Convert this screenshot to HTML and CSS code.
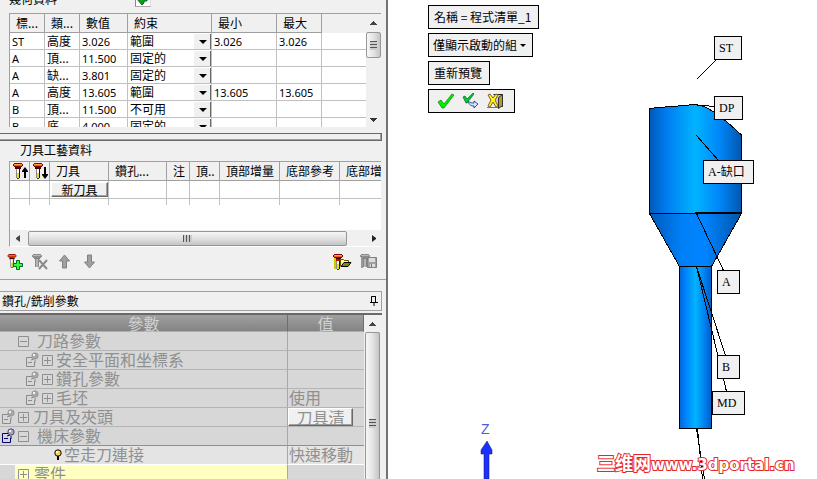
FILE: index.html
```
<!DOCTYPE html>
<html lang="zh-Hant">
<head>
<meta charset="utf-8">
<title>鑽孔/銑削參數</title>
<link rel="stylesheet" href="styles.css">
</head>
<body>
<svg class="sprite" aria-hidden="true">
  <symbol id="drill" viewBox="0 0 12 16">
    <path d="M2 0h8v1h1v2h-1v1H2V3H1V1h1z" fill="#8b0000"/>
    <path d="M2 1h8v1H2z" fill="#ffa040"/><path d="M2 2h8v1H2z" fill="#f06010"/>
    <path d="M3 4h6v2H3z" fill="#400"/><path d="M4 6h1v9H4z" fill="#888"/><path d="M5 6h2v5H5z" fill="#fff"/><path d="M5 10h2v5H5z" fill="#f0e000"/><path d="M7 6h1v9H7z" fill="#111"/><path d="M5 15h2v1H5z" fill="#333"/>
  </symbol>
  <symbol id="drill-off" viewBox="0 0 12 16">
    <path d="M2 0h8v1h1v2h-1v1H2V3H1V1h1z" fill="#8c8c8c"/><path d="M2 1h8v1H2z" fill="#b8b8b8"/><path d="M3 4h6v1H3z" fill="#808080"/><path d="M4 5h1v8H4zM7 5h1v8H7z" fill="#8a8a8a"/><path d="M5 5h2v8H5z" fill="#b5b5b5"/>
  </symbol>
  <symbol id="plus" viewBox="0 0 11 11"><path d="M.5.5h10v10H.5zM2 5.500h7M5.500 2v7" fill="none" stroke="#8f8f8f"/></symbol>
  <symbol id="minus" viewBox="0 0 11 11"><path d="M.5.5h10v10H.5zM2 5.500h7" fill="none" stroke="#8f8f8f"/></symbol>
  <symbol id="link" viewBox="0 0 13 15">
    <path d="M6 5.500H.5v9h8V10M2 10.500h4" fill="none" stroke="currentColor"/>
    <path d="M8 7l-3 1M9 8v3" stroke="currentColor"/>
    <circle cx="9" cy="4" r="3.200" fill="#a8a8a8" stroke="currentColor" stroke-width=".6"/><path d="M7 2h2v2H7z" fill="#f4f4f4"/>
  </symbol>
  <symbol id="up" viewBox="0 0 7 4"><path d="M3 0h1v1h1v1h1v1h1v1H0V3h1V2h1V1h1z" fill="#444"/></symbol>
  <symbol id="down" viewBox="0 0 7 4"><path d="M0 0h7v1H6v1H5v1H4v1H3V3H2V2H1V1H0z" fill="#333"/></symbol>
</svg>

<div class="app">
  <aside class="side">
    <section class="geometry">
      <div class="geo-head">
        <h2>幾何資料</h2>
        <button class="import" aria-label="匯入"><svg width="12" height="12"><path d="M0 6l5-6v3h5v5H7v2L5 12z" fill="#12a012" stroke="#063" /><path d="M3 6l3-3v4z" fill="#5f5"/></svg></button>
      </div>
      <div class="geo-grid">
        <table class="grid">
          <colgroup><col class="w-tag"><col class="w-tag"><col class="w-num"><col class="w-rule"><col class="w-min"><col class="w-max"><col></colgroup>
          <thead><tr><th>標...</th><th>類...</th><th>數值</th><th>約束</th><th>最小</th><th>最大</th><th class="rest"></th></tr></thead>
          <tbody>
            <tr><td>ST</td><td>高度</td><td>3.026</td><td><label class="pick"><select aria-label="約束"><option>範圍</option></select></label></td><td>3.026</td><td>3.026</td><td class="rest"></td></tr>
            <tr><td>A</td><td>頂...</td><td>11.500</td><td><label class="pick"><select aria-label="約束"><option>固定的</option></select></label></td><td></td><td></td><td class="rest"></td></tr>
            <tr><td>A</td><td>缺...</td><td>3.801</td><td><label class="pick"><select aria-label="約束"><option>固定的</option></select></label></td><td></td><td></td><td class="rest"></td></tr>
            <tr><td>A</td><td>高度</td><td>13.605</td><td><label class="pick"><select aria-label="約束"><option>範圍</option></select></label></td><td>13.605</td><td>13.605</td><td class="rest"></td></tr>
            <tr><td>B</td><td>頂...</td><td>11.500</td><td><label class="pick"><select aria-label="約束"><option>不可用</option></select></label></td><td></td><td></td><td class="rest"></td></tr>
            <tr><td>B</td><td>底...</td><td>4.000</td><td><label class="pick"><select aria-label="約束"><option>固定的</option></select></label></td><td></td><td></td><td class="rest"></td></tr>
          </tbody>
        </table>
        <div class="vbar"><svg width="7" height="4"><use href="#up"/></svg><span class="thumb short"><i></i></span><svg class="end" width="7" height="4"><use href="#down"/></svg></div>
      </div>
    </section>

    <div class="splitter"></div>

    <section class="tech">
      <h2>刀具工藝資料</h2>
      <div class="tech-box">
        <div class="tech-grid">
          <table class="grid">
            <colgroup><col class="w-icon"><col class="w-icon"><col class="w-tool"><col class="w-hole"><col class="w-note"><col class="w-top"><col class="w-inc"><col class="w-inc"><col></colgroup>
            <thead><tr>
              <th class="ico"><svg width="16" height="16"><use href="#drill" width="12" height="16"/><path d="M12 15V9h-2V8l3-4 3 4v1h-2v6z"/></svg></th>
              <th class="ico"><svg width="16" height="16"><use href="#drill" width="12" height="16"/><path d="M12 4v7h-2v1l3 4 3-4v-1h-2V4z"/></svg></th>
              <th>刀具</th><th>鑽孔...</th><th>注</th><th>頂..</th><th>頂部增量</th><th>底部參考</th><th class="rest">底部增量</th></tr></thead>
            <tbody>
              <tr><td></td><td></td><td><button class="raised new-tool">新刀具</button></td><td></td><td></td><td></td><td></td><td></td><td class="rest"></td></tr>
              <tr class="stub"><td></td><td></td><td></td><td></td><td></td><td></td><td></td><td></td><td class="rest"></td></tr>
            </tbody>
          </table>
        </div>
        <div class="hbar">
          <svg width="4" height="7"><path d="M4 0v7L0 4V3z" fill="#444"/></svg><span class="thumb wide"><i></i></span><svg width="4" height="7"><path d="M0 0v7l4-3V3z" fill="#222"/></svg>
        </div>
      </div>
      <div class="tools">
        <button aria-label="新增刀具"><svg width="18" height="16"><use href="#drill" width="12" height="14"/><path d="M10.500 6.500h3v3h3v3h-3v3h-3v-3h-3v-3h3z" fill="#3f3" stroke="#063"/></svg></button>
        <button aria-label="刪除刀具"><svg width="18" height="16"><use href="#drill-off" width="12" height="16"/><path d="M8 6l8 9M16 6l-8 9" stroke="#8a8a8a" stroke-width="2"/></svg></button>
        <button aria-label="上移"><svg width="18" height="16"><path d="M8.500 1l5 6h-3v7h-4V7h-3z" fill="#a0a0a0" stroke="#808080"/></svg></button>
        <button aria-label="下移"><svg width="18" height="16"><path d="M8.500 14l5-6h-3V1h-4v7h-3z" fill="#a0a0a0" stroke="#808080"/></svg></button>
        <span class="space"></span>
        <button aria-label="開啟刀具"><svg width="20" height="16"><use href="#drill" width="12" height="16"/><path d="M2 4h2v11H2z" fill="#cc0"/><path d="M4 6h5" stroke="#c00" stroke-width="2"/><path d="M8.500 12V5.500h3l1 1h4V9" fill="#ffff90" stroke="#550"/><path d="M9 12.500l3-4h7l-3 4z" fill="#880" stroke="#000"/></svg></button>
        <button aria-label="儲存刀具"><svg width="20" height="16"><use href="#drill-off" width="12" height="16"/><path d="M2 4h2v10H2z" fill="#999"/><path d="M8.500 3.500h9v10h-9z" fill="#a0a0a0" stroke="#808080"/><path d="M10 4h6v4h-6zM11 10h5v3h-5z" fill="#ddd"/><path d="M12 10h1v3h-1z" fill="#777"/></svg></button>
      </div>
    </section>

    <section class="params">
      <h2 class="caption"><span>鑽孔/銑削參數</span><button aria-label="釘選"><svg width="8" height="10"><path d="M1.500 6V.5h4V6M0 6.500h8M4 7v3" fill="none" stroke="#000"/><path d="M5 0h1v6H5z"/></svg></button></h2>
      <div class="tree-wrap">
        <table class="tree">
          <colgroup><col class="w-param"><col></colgroup>
          <thead><tr><th>參數</th><th>值</th></tr></thead>
          <tbody>
            <tr><td><div class="node group"><svg class="box"><use href="#minus"/></svg>刀路參數</div></td><td></td></tr>
            <tr><td><div class="node child"><svg class="pin"><use href="#link"/></svg><svg class="box"><use href="#plus"/></svg>安全平面和坐標系</div></td><td></td></tr>
            <tr><td><div class="node child"><svg class="pin"><use href="#link"/></svg><svg class="box"><use href="#plus"/></svg>鑽孔參數</div></td><td></td></tr>
            <tr><td><div class="node child"><svg class="pin"><use href="#link"/></svg><svg class="box"><use href="#plus"/></svg>毛坯</div></td><td>使用</td></tr>
            <tr><td><div class="node root"><svg class="pin"><use href="#link"/></svg><svg class="box"><use href="#plus"/></svg>刀具及夾頭</div></td><td><button class="raised tool-list">刀具清</button></td></tr>
            <tr class="open"><td><div class="node root active"><svg class="pin"><use href="#link"/></svg><svg class="box"><use href="#minus"/></svg><span>機床參數</span></div></td><td></td></tr>
            <tr class="current"><td><div class="node leaf"><svg width="8" height="11"><circle cx="4" cy="4" r="3.200" fill="#ffd040" stroke="#000"/><path d="M2 2h2v2H2z" fill="#fff"/><path d="M3 7h2v4H3z"/></svg>空走刀連接</div></td><td>快速移動</td></tr>
            <tr class="part"><td><div class="node group"><svg class="box"><use href="#plus"/></svg>零件</div></td><td></td></tr>
          </tbody>
        </table>
        <div class="vbar tall"><svg width="7" height="4"><use href="#up"/></svg><span class="thumb long"><i></i></span></div>
      </div>
    </section>
  </aside>

  <main class="view">
    <svg class="scene" viewBox="388 0 429 479" width="429" height="479" aria-label="刀具預覽">
      <defs>
        <linearGradient id="metal"><stop offset="0" stop-color="#0058b8"/><stop offset=".18" stop-color="#007cf0"/><stop offset=".5" stop-color="#00b4ff"/><stop offset=".75" stop-color="#0088fa"/><stop offset="1" stop-color="#0058b0"/></linearGradient>
        <linearGradient id="cone"><stop offset="0" stop-color="#0058b8"/><stop offset=".35" stop-color="#0080f8"/><stop offset=".6" stop-color="#0084ff"/><stop offset="1" stop-color="#0054a8"/></linearGradient>
        <linearGradient id="shank"><stop offset="0" stop-color="#0068d8"/><stop offset=".2" stop-color="#0084ff"/><stop offset=".5" stop-color="#00b4ff"/><stop offset=".85" stop-color="#0074e8"/><stop offset="1" stop-color="#0060c0"/></linearGradient>
      </defs>
      <g stroke="#000" shape-rendering="crispEdges">
        <path d="M649.500 213.500v-105l10-1 12-1 14-1 8-1 7 1 6 2 8 5 12 9 15 13.500v77.500z" fill="url(#metal)"/>
        <path d="M649.500 213.500h92l-30 53h-32z" fill="url(#cone)"/>
        <path d="M679.500 266.500h32v162h-32z" fill="url(#shank)"/>
        <path d="M696.500 79.500l20-20M693 104.500l10 1 12 1M696.500 135.500l22 25M696.500 213.500l27 57M696.500 266.500l29 89M696.500 266.500l30 125M696.500 429l8 50M697.500 429l5 50" fill="none"/>
      </g>
      <path d="M487 441l5 9v4h-3v25h-5v-25h-3v-4z" fill="#1c30ff" stroke="#101060" stroke-width=".5"/>
      <text class="axis" x="481" y="434">Z</text>
      <text class="mark" x="597" y="470"><tspan class="han">三维网</tspan>www.3dportal.cn</text>
    </svg>
    <span class="tag st">ST</span>
    <span class="tag dp">DP</span>
    <span class="tag notch">A-缺口</span>
    <span class="tag a">A</span>
    <span class="tag b">B</span>
    <span class="tag md">MD</span>
    <div class="menu">
      <button class="panel">名稱 = 程式清單_1</button>
      <label class="panel filter"><select aria-label="顯示"><option>僅顯示啟動的組</option></select></label>
      <button class="panel">重新預覽</button>
      <div class="panel actions">
        <button aria-label="確定"><svg width="18" height="16"><path d="M1 9l3-2 3 4L15 1l2 1L7 15H5z" fill="#0e0" stroke="#080" stroke-width=".7"/></svg></button>
        <button aria-label="套用"><svg width="18" height="16"><path d="M1 4l2-1 2 3 6-6 1 1-7 9H4z" fill="#0c2" stroke="#063" stroke-width=".7"/><path d="M6 8c1 4 3 5 6 5v2l4-4-4-3v2c-2 0-4 0-6-2z" fill="#cfe8ff" stroke="#103080" stroke-width=".8"/></svg></button>
        <button aria-label="離開"><svg width="18" height="16"><path d="M6.500 1.500h9v12h-4" fill="#c8c8d8" stroke="#222"/><path d="M15.500 1.500l-4 3v11l4-3z" fill="#b0a020" stroke="#333"/><path d="M0 14.500h11" stroke="#777"/><path d="M1 2l2-1 3 4 3-4 2 1-3 5 3 6-2 1-3-5-3 5-2-1 3-6z" fill="#ff0" stroke="#853" stroke-width="1"/></svg></button>
      </div>
    </div>
  </main>
</div>
</body>
</html>
```

FILE: styles.css
```
* { box-sizing: border-box; }

body {
  margin: 0;
  font: 12px/16px "Noto Sans CJK TC", sans-serif;
  color: #000;
  background: #fff;
}

button, select {
  font: inherit;
  color: inherit;
  margin: 0;
  padding: 0;
  border: 0;
  background: none;
}

h2 { margin: 0; font: inherit; }
svg { display: block; flex: none; }
.sprite { position: absolute; width: 0; height: 0; }

.app { display: flex; height: 100vh; overflow: hidden; }

.side {
  flex: none;
  width: 388px;
  background: #f0f0f0;
  border-right: 2px solid #737373;
  overflow: hidden;
}

/* Geometry data */
.geometry { padding: 0 5px 6px 9px; }
.geo-head { display: flex; align-items: flex-end; height: 13px; gap: 78px; overflow: hidden; padding-bottom: 6px; }
.import { background: #fff; border: 1px solid #888; border-color: #888 #ddd #aaa #888; padding: 0 1px 1px; height: 16px; }
.geo-grid {
  display: flex;
  height: 114px;
  overflow: hidden;
  background: #fff;
  border-top: 1px solid #a0a0a0;
  border-left: 1px solid #a0a0a0;
}

.grid { flex: 1; min-width: 0; width: 100%; table-layout: fixed; border-collapse: separate; border-spacing: 0; }
.grid th, .grid td {
  overflow: hidden;
  white-space: nowrap;
  text-align: left;
  font-weight: normal;
  border-right: 1px solid #c0c0c0;
  border-bottom: 1px solid #c0c0c0;
}
.grid th { height: 19px; padding: 0 0 0 6px; background: #f0f0f0; border-color: #a0a0a0; }
.grid td { height: 17px; padding: 0 0 0 2px; font-family: "Noto Sans", "Noto Sans CJK TC", sans-serif; font-size: 11px; }
.geo-grid td:nth-child(2) { font-size: 12px; }
.grid .rest { border-right: 0; }
.geo-grid th.rest { border-bottom: 0; }
.geo-grid tbody td { padding-top: 1px; line-height: 15px; }
.w-tag { width: 35px; }
.w-num { width: 48px; }
.w-rule { width: 84px; }
.w-min { width: 65px; }
.w-max { width: 45px; }

.pick { display: flex; position: relative; }
.pick select { appearance: none; flex: 1; height: 15px; font-size: 12px; line-height: 15px; }
.pick::before {
  content: "";
  position: absolute;
  z-index: 1;
  right: 0;
  width: 16px;
  height: 15px;
  background: #f0f0f0;
  border-right: 1px solid #696969;
  border-bottom: 1px solid #696969;
  pointer-events: none;
}
.pick::after {
  content: "";
  position: absolute;
  z-index: 2;
  right: 4px;
  top: 6px;
  border: 4px solid transparent;
  border-top-color: #000;
  border-bottom: 0;
  pointer-events: none;
}

/* Scroll bars */
.vbar {
  display: flex;
  flex-direction: column;
  align-items: center;
  flex: none;
  width: 15px;
  gap: 7px;
  padding: 7px 0 5px;
  background: #f0f0f0;
}
.end { margin-top: auto; }
.thumb {
  display: flex;
  align-items: center;
  justify-content: center;
  border: 1px solid #979797;
  border-radius: 2px;
}
.short, .long { width: 15px; background: linear-gradient(to right, #f6f6f6, #e4e4e4 50%, #c4c4c8); }
.short { height: 26px; }
.short i, .long i { width: 7px; height: 9px; background: repeating-linear-gradient(#555 0 1px, #ccc 1px 3px); }
.wide { flex: 1; height: 15px; background: linear-gradient(#f6f6f6, #e2e2e2 50%, #c4c4c6); }
.wide i { width: 9px; height: 7px; background: repeating-linear-gradient(to right, #555 0 1px, #ccc 1px 3px); }

.splitter {
  height: 8px;
  margin-right: 4px;
  border: 1px solid #696969;
  border-left: 0;
  box-shadow: inset -1px -1px #a0a0a0;
}

/* Tool technology */
.tech { padding-right: 5px; border-bottom: 1px solid #a0a0a0; }
.tech h2 { height: 20px; padding-left: 20px; line-height: 18px; }
.tech-box {
  margin-left: 9px;
  border-top: 1px solid #a0a0a0;
  border-left: 1px solid #a0a0a0;
  border-bottom: 1px solid #fff;
}
.tech-grid { height: 68px; background: #fff; }
.tech-grid td { height: 18px; padding: 0; }
.tech-grid .stub td { height: 6px; border-bottom: 0; }
.grid .ico { padding: 0 0 0 2px; }
.w-icon { width: 20px; }
.w-tool { width: 59px; }
.w-hole { width: 58px; }
.w-note { width: 23px; }
.w-top { width: 30px; }
.w-inc { width: 60px; }
.hbar { display: flex; align-items: center; gap: 8px; padding: 0 5px 0 6px; height: 16px; }
.hbar svg:last-child { margin-left: 17px; }

.raised {
  display: block;
  background: #f0f0f0;
  border: 1px solid;
  border-color: #fff #696969 #696969 #fff;
  box-shadow: inset -1px -1px #a0a0a0;
  white-space: nowrap;
  overflow: hidden;
}
.new-tool { width: 57px; height: 15px; margin-left: 1px; line-height: 13px; font-size: 12px; font-family: "Noto Sans CJK TC", sans-serif; }

.tools { display: flex; align-items: center; gap: 7px; height: 32px; padding: 0 2px 2px 6px; }
.space { flex: 1; }

/* Parameter tree */
.params { padding-top: 11px; }
.caption {
  display: flex;
  justify-content: space-between;
  align-items: center;
  height: 20px;
  margin-right: 4px;
  padding: 0 3px 1px 2px;
  border: 1px solid #a0a0a0;
  border-left: 0;
}
.tree-wrap {
  display: flex;
  height: 200px;
  margin: 2px 4px 0 0;
  padding-right: 2px;
  border-top: 2px solid #696969;
}
.tree {
  flex: 1;
  table-layout: fixed;
  border-collapse: separate;
  border-spacing: 0;
  align-self: flex-start;
  background: #d7d7d7;
  color: #909090;
  font-size: 16px;
  line-height: 16px;
}
.w-param { width: 288px; }
.tree th {
  height: 17px;
  padding: 0;
  font-weight: normal;
  line-height: 16px;
  color: #d0d0d0;
  background: linear-gradient(#a0a0a0, #838383);
  border-right: 1px solid #6e6e6e;
  border-bottom: 1px solid #b0b0b0;
}
.tree td {
  height: 19px;
  padding: 0 0 2px;
  border-bottom: 1px solid #b4b4b4;
  overflow: hidden;
  white-space: nowrap;
}
.tree td:first-child { border-right: 1px solid #a8a8a8; }
.tree td:last-child { padding-left: 1px; }
.tree .open td { border-bottom-color: #909090; }
.tree .current td { background: #e4e4e4; border-bottom-color: #fff; }
.tree .part td:first-child { background: linear-gradient(to right, #d7d7d7 15px, #ffffc0 15px); }
.node { display: flex; align-items: center; height: 16px; gap: 4px; }
.group { padding-left: 18px; gap: 8px; }
.part .group { gap: 5px; }
.child { padding-left: 26px; gap: 3px; }
.root { padding-left: 2px; }
.leaf { padding-left: 54px; gap: 2px; }
.box { width: 11px; height: 11px; margin-top: 2px; }
.pin { width: 13px; height: 15px; color: #8a8a8a; }
.root .pin { margin-right: -1px; }
.active .pin { color: #000070; }
.active span { padding-left: 4px; }
.tree td:has(.tool-list) { padding: 0; }
.tool-list { width: 65px; height: 18px; line-height: 15px; }
.tall { width: 16px; padding-bottom: 0; gap: 6px; }
.long { flex: 1; border-bottom: 0; }

/* Preview canvas */
.view { position: relative; flex: 1; min-width: 0; overflow: hidden; }
.scene { position: absolute; left: 0; top: 0; }
.axis { font: 14px "Liberation Sans", sans-serif; fill: #4a5ce0; }
.mark { font: bold 15px "DejaVu Sans", sans-serif; fill: #fff; stroke: #e82828; stroke-width: 2px; paint-order: stroke; }
.han { font: bold 18px "Noto Sans CJK SC", sans-serif; }

.tag {
  position: absolute;
  height: 24px;
  padding: 0 6px 0 4px;
  border: 1px solid #000;
  background: #f0f0f0;
  font: 12px/22px "Liberation Serif", "Noto Sans CJK TC", serif;
  white-space: nowrap;
}
.st { left: 326px; top: 36px; width: 28px; }
.dp { left: 326px; top: 96px; width: 29px; }
.notch { left: 315px; top: 160px; width: 51px; }
.a { left: 329px; top: 270px; width: 23px; }
.b { left: 329px; top: 355px; width: 23px; }
.md { left: 324px; top: 391px; width: 33px; }

.menu {
  position: relative;
  display: flex;
  flex-direction: column;
  align-items: flex-start;
  gap: 4px;
  padding: 5px 0 0 40px;
}
.panel {
  display: flex;
  align-items: center;
  height: 24px;
  padding: 0 7px 0 5px;
  border: 1px solid #000;
  background: #f0f0f0;
  white-space: nowrap;
}
.filter { gap: 2px; padding: 0 6px 0 4px; }
.filter select { appearance: none; }
.filter::after { content: ""; border: 3px solid transparent; border-top-color: #000; border-bottom: 0; }
.actions { gap: 7px; padding: 0 9px 0 8px; }
```
